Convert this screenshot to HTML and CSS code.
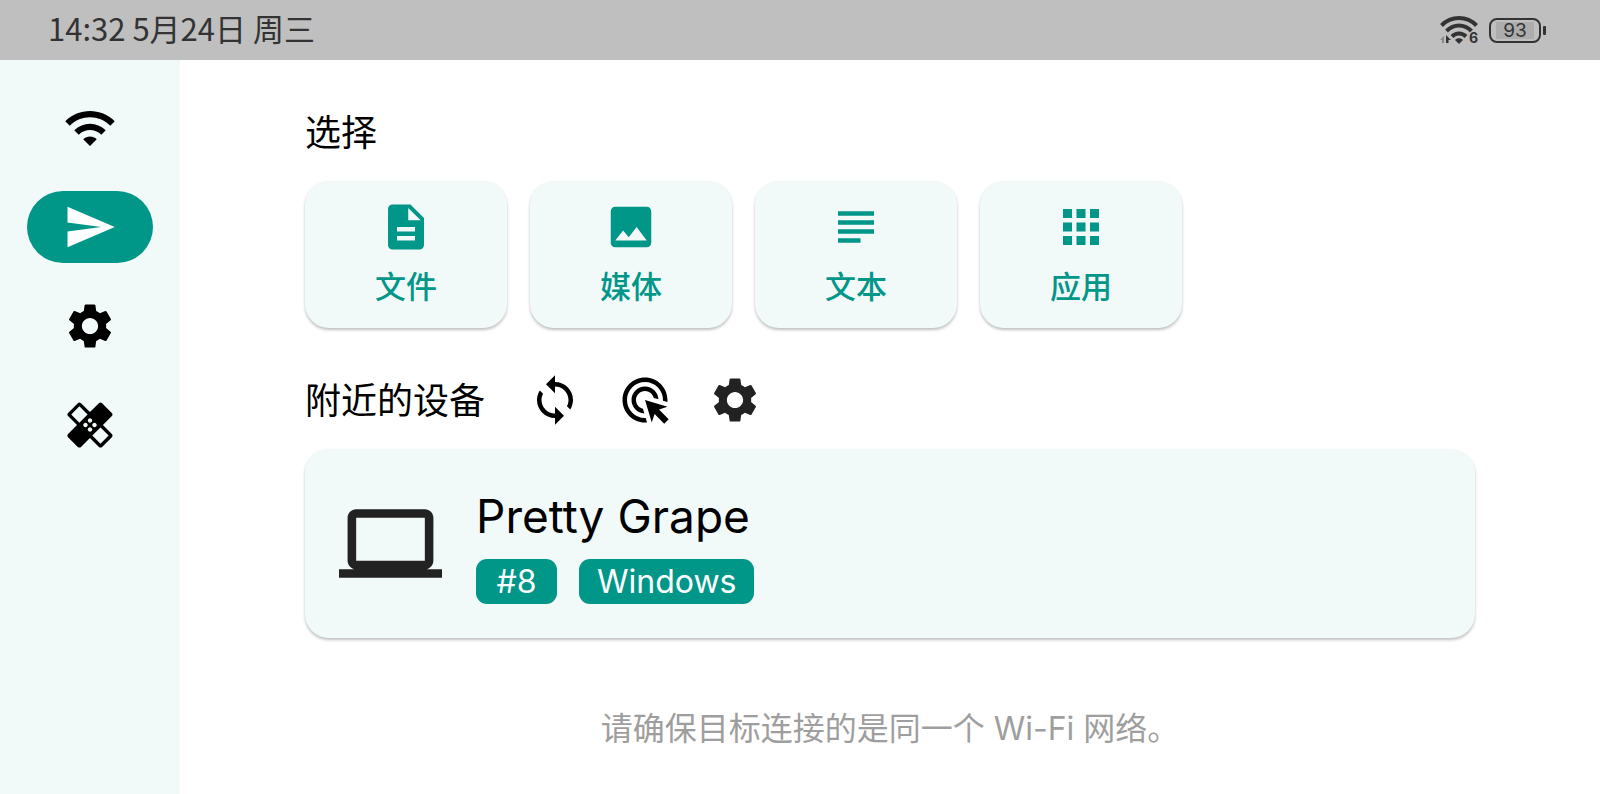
FILE: index.html
```html
<!DOCTYPE html>
<html lang="zh-CN">
<head>
  <meta charset="UTF-8">
  <meta name="viewport" content="width=device-width, initial-scale=1">
  <title>发送</title>
  <link rel="stylesheet" href="styles.css">
</head>
<body>

  <header class="status-bar">
    <span class="clock">14:32 5月24日 周三</span>
    <div class="status-icons">
      <div class="status-wifi">
        <svg class="wifi-icon" viewBox="0 0 38 30" aria-hidden="true">
          <g fill="none" stroke="#333" stroke-width="4">
            <path d="M1.500 10.500C11 .5 27 .5 36.500 10.500"/>
            <path d="M6.500 16C14 8.500 24 8.500 31.500 16"/>
            <path d="M12 21.500C16 17.500 22 17.500 26 21.500"/>
          </g>
          <path fill="#333" d="M15 25c2-2.200 6-2.200 8 0l-4 4z"/>
          <path fill="#888" d="M0 25l4-4v7H2v-3z"/>
          <path fill="#333" d="M6 20l5 5H8.500v3H6z"/>
        </svg>
        <span class="wifi-gen">6</span>
      </div>
      <div class="battery">
        <span class="battery-level">93</span>
      </div>
    </div>
  </header>

  <div class="app">
    <nav class="sidebar">
      <a class="nav-item" href="#receive" aria-label="接收">
        <svg class="icon" viewBox="0 0 24 24"><path d="M1 9l2 2c4.970-4.970 13.030-4.970 18 0l2-2C16.930 2.930 7.080 2.930 1 9zm8 8l3 3 3-3c-1.650-1.660-4.340-1.660-6 0zm-4-4l2 2c2.760-2.760 7.240-2.760 10 0l2-2C15.140 9.140 8.870 9.140 5 13z"/></svg>
      </a>
      <a class="nav-item active" href="#send" aria-label="发送" aria-current="page">
        <svg class="icon" viewBox="0 0 24 24"><path d="M2.010 21L23 12 2.010 3 2 10l15 2-15 2z"/></svg>
      </a>
      <a class="nav-item" href="#settings" aria-label="设置">
        <svg class="icon" viewBox="0 0 24 24"><path id="gear" d="M19.140 12.940c.04-.3.060-.61.060-.94 0-.32-.02-.64-.07-.94l2.030-1.580c.18-.14.23-.41.12-.61l-1.920-3.320c-.12-.22-.37-.29-.59-.22l-2.390.96c-.5-.38-1.030-.7-1.620-.94l-.36-2.540c-.04-.24-.24-.41-.48-.41h-3.840c-.24 0-.43.17-.47.41l-.36 2.540c-.59.24-1.130.57-1.620.94l-2.390-.96c-.22-.08-.47 0-.59.22L2.740 8.870c-.12.21-.08.47.12.61l2.030 1.580c-.05.3-.09.63-.09.94s.02.64.07.94l-2.030 1.580c-.18.14-.23.41-.12.61l1.920 3.320c.12.22.37.29.59.22l2.390-.96c.5.38 1.030.7 1.620.94l.36 2.540c.05.24.24.41.48.41h3.840c.24 0 .44-.17.47-.41l.36-2.540c.59-.24 1.130-.56 1.620-.94l2.390.96c.22.08.47 0 .59-.22l1.920-3.320c.12-.22.07-.47-.12-.61l-2.010-1.580zM12 15.600c-1.980 0-3.600-1.620-3.600-3.600s1.620-3.600 3.600-3.600 3.600 1.620 3.600 3.600-1.620 3.600-3.600 3.600z"/></svg>
      </a>
      <a class="nav-item" href="#fix" aria-label="故障排除">
        <svg class="icon" viewBox="0 0 24 24"><path d="M17.730 12.020l3.980-3.980c.39-.39.39-1.020 0-1.410l-4.340-4.340c-.39-.39-1.020-.39-1.410 0l-3.980 3.980L8 2.290C7.800 2.100 7.550 2 7.290 2c-.25 0-.51.1-.7.29L2.250 6.630c-.39.39-.39 1.020 0 1.410l3.980 3.980L2.250 16c-.39.39-.39 1.020 0 1.410l4.340 4.340c.39.39 1.020.39 1.410 0l3.980-3.980 3.980 3.980c.2.2.45.29.71.29.26 0 .51-.1.71-.29l4.340-4.340c.39-.39.39-1.020 0-1.410l-3.990-3.980zM12 9c.55 0 1 .45 1 1s-.45 1-1 1-1-.45-1-1 .45-1 1-1zm-4.710 1.960L3.660 7.340l3.630-3.630 3.620 3.620-3.620 3.630zM10 13c-.55 0-1-.45-1-1s.45-1 1-1 1 .45 1 1-.45 1-1 1zm2 2c-.55 0-1-.45-1-1s.45-1 1-1 1 .45 1 1-.45 1-1 1zm2-4c.55 0 1 .45 1 1s-.45 1-1 1-1-.45-1-1 .45-1 1-1zm2.660 9.340l-3.630-3.620 3.630-3.630 3.620 3.620-3.620 3.630z"/></svg>
      </a>
    </nav>

    <main class="content">
      <h2 class="title">选择</h2>
      <div class="options">
        <button class="option" type="button">
          <svg class="icon" viewBox="0 0 24 24"><path d="M14 2H6c-1.100 0-1.990.9-1.990 2L4 20c0 1.100.89 2 1.990 2H18c1.100 0 2-.9 2-2V8l-6-6zm2 16H8v-2h8v2zm0-4H8v-2h8v2zm-3-5V3.500L18.500 9H13z"/></svg>
          <span>文件</span>
        </button>
        <button class="option" type="button">
          <svg class="icon" viewBox="0 0 24 24"><path d="M21 19V5c0-1.100-.9-2-2-2H5c-1.100 0-2 .9-2 2v14c0 1.100.9 2 2 2h14c1.100 0 2-.9 2-2zM8.500 13.500l2.500 3.010L14.500 12l4.500 6H5l3.500-4.500z"/></svg>
          <span>媒体</span>
        </button>
        <button class="option" type="button">
          <svg class="icon" viewBox="0 0 24 24"><path d="M4 5h16v2H4zM4 9h16v2H4zM4 13h16v2H4zM4 17h10v2H4z"/></svg>
          <span>文本</span>
        </button>
        <button class="option" type="button">
          <svg class="icon" viewBox="0 0 24 24"><path d="M4 4h4v4H4zM10 4h4v4h-4zM16 4h4v4h-4zM4 10h4v4H4zM10 10h4v4h-4zM16 10h4v4h-4zM4 16h4v4H4zM10 16h4v4h-4zM16 16h4v4h-4z"/></svg>
          <span>应用</span>
        </button>
      </div>

      <div class="nearby">
        <h2 class="title">附近的设备</h2>
        <div class="actions">
          <button class="action" type="button" aria-label="刷新">
            <svg class="icon" viewBox="0 0 24 24"><path d="M12 4V1L8 5l4 4V6c3.310 0 6 2.690 6 6 0 1.010-.25 1.970-.7 2.800l1.460 1.460C19.540 15.030 20 13.570 20 12c0-4.420-3.580-8-8-8zm0 14c-3.310 0-6-2.690-6-6 0-1.010.25-1.970.7-2.800L5.240 7.740C4.460 8.970 4 10.430 4 12c0 4.420 3.580 8 8 8v3l4-4-4-4v3z"/></svg>
          </button>
          <button class="action" type="button" aria-label="手动发送">
            <svg class="icon" viewBox="0 0 24 24"><path d="M11.710 17.990C8.530 17.840 6 15.220 6 12c0-3.310 2.690-6 6-6 3.220 0 5.840 2.530 5.990 5.710l-2.100-.63C15.480 9.310 13.890 8 12 8c-2.210 0-4 1.790-4 4 0 1.890 1.310 3.480 3.080 3.890l.63 2.100zM22 12c0 .3-.01.6-.04.9l-1.970-.59c.01-.1.010-.21.010-.31 0-4.420-3.580-8-8-8s-8 3.580-8 8 3.580 8 8 8c.1 0 .21 0 .31-.01l.59 1.970c-.3.030-.6.040-.9.040-5.520 0-10-4.480-10-10S6.480 2 12 2s10 4.480 10 10zm-3.770 4.260L22 15l-10-3 3 10 1.260-3.770 4.270 4.270 1.980-1.980-4.280-4.260z"/></svg>
          </button>
          <button class="action soft" type="button" aria-label="发送设置">
            <svg class="icon" viewBox="0 0 24 24"><use href="#gear"/></svg>
          </button>
        </div>
      </div>

      <a class="device" href="#device">
        <svg class="device-icon" viewBox="0 0 24 24"><path d="M20 18c1.100 0 1.990-.9 1.990-2L22 6c0-1.100-.9-2-2-2H4c-1.100 0-2 .9-2 2v10c0 1.100.9 2 2 2H0v2h24v-2h-4zM4 6h16v10H4V6z"/></svg>
        <div class="device-info">
          <div class="device-name">Pretty Grape</div>
          <div class="tags">
            <span class="tag">#8</span>
            <span class="tag">Windows</span>
          </div>
        </div>
      </a>

      <p class="hint">请确保目标连接的是同一个 Wi-Fi 网络。</p>
    </main>
  </div>

</body>
</html>
```
FILE: styles.css
```css
* {
  box-sizing: border-box;
}

body {
  margin: 0;
  min-height: 100vh;
  display: flex;
  flex-direction: column;
  font-family: "Noto Sans CJK SC", sans-serif;
  font-size: 32px;
  color: #000;
  background-color: #fff;
}

.status-bar {
  display: flex;
  justify-content: space-between;
  align-items: center;
  height: 60px;
  padding: 0 59px 0 48px;
  background-color: #bfbfbf;
  color: #333;
}

.clock {
  padding-bottom: 4px;
  font-size: 31px;
  line-height: 48px;
}

.status-icons {
  display: flex;
  align-items: center;
  gap: 11px;
}

.status-wifi {
  position: relative;
}

.wifi-icon {
  display: block;
  width: 38px;
  height: 30px;
}

.wifi-gen {
  position: absolute;
  right: 0;
  bottom: -1px;
  font: bold 14px/16px Inter, sans-serif;
}

.battery {
  position: relative;
  width: 52px;
  height: 25px;
  padding: 2px 5px;
  border: 2px solid #333;
  border-radius: 8px;
}

.battery::after {
  content: "";
  position: absolute;
  top: 6px;
  right: -7px;
  width: 3px;
  height: 9px;
  border-radius: 1px;
  background-color: #333;
}

.battery-level {
  display: block;
  text-align: center;
  font: 19px/17px Inter, sans-serif;
  background-color: #adadad;
}

.app {
  flex: 1;
  display: flex;
}

.sidebar {
  display: flex;
  flex-direction: column;
  align-items: center;
  gap: 27px;
  width: 180px;
  padding-top: 32px;
  background-color: #f2f9f9;
}

.nav-item {
  display: flex;
  justify-content: center;
  align-items: center;
  width: 126px;
  height: 72px;
  border-radius: 36px;
  color: #000;
}

.nav-item.active {
  background-color: #009688;
  color: #fff;
}

.icon {
  display: block;
  width: 54px;
  height: 54px;
  fill: currentColor;
}

.content {
  flex: 1;
  padding: 45px 125px 0;
}

.title {
  margin: 0;
  padding-bottom: 4px;
  font-size: 36px;
  font-weight: 400;
  line-height: 50px;
}

.options {
  display: flex;
  gap: 23px;
  margin-top: 22px;
}

.option {
  display: flex;
  flex-direction: column;
  align-items: center;
  gap: 7px;
  width: 202px;
  padding: 19px 18px;
  border: none;
  border-radius: 24px;
  background-color: #f2f9f9;
  box-shadow: 0 2px 3px rgba(0, 0, 0, 0.25);
  color: #009688;
  font-family: inherit;
  font-size: 31px;
  font-weight: 500;
  line-height: 48px;
  cursor: pointer;
}

.nearby {
  display: flex;
  align-items: center;
  gap: 43px;
  margin: 45px 0 22px;
}

.actions {
  display: flex;
  gap: 36px;
}

.action {
  padding: 0;
  border: none;
  background: none;
  color: #000;
  cursor: pointer;
}

.action.soft {
  color: #222;
}

.device {
  display: flex;
  align-items: center;
  gap: 34px;
  padding: 34px;
  border-radius: 24px;
  background-color: #f2f9f9;
  box-shadow: 0 2px 3px rgba(0, 0, 0, 0.25);
  color: #000;
  font-family: Inter, sans-serif;
  text-decoration: none;
}

.device-icon {
  width: 103px;
  height: 103px;
  fill: #222;
}

.device-name {
  padding-top: 6px;
  font-size: 46px;
  line-height: 55px;
}

.tags {
  display: flex;
  gap: 22px;
  margin-top: 15px;
}

.tag {
  min-width: 81px;
  padding: 0 18px;
  border-radius: 11px;
  background-color: #009688;
  color: #fff;
  line-height: 45px;
  text-align: center;
}

.hint {
  margin: 67px 0 0;
  line-height: 48px;
  text-align: center;
  color: #9e9e9e;
  font-family: Inter, "Noto Sans CJK SC", sans-serif;
}
```
